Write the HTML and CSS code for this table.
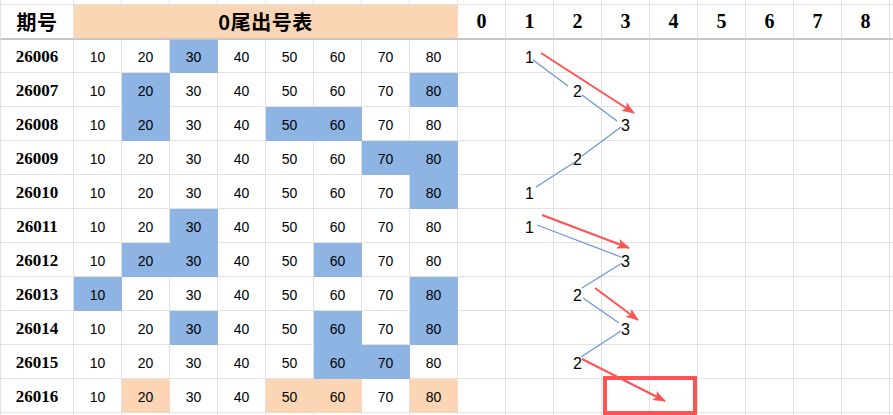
FILE: index.html
```html
<!DOCTYPE html>
<html lang="zh-CN">
<head>
<meta charset="utf-8">
<title>0尾出号表</title>
<link rel="stylesheet" href="styles.css">
</head>
<body>
<div class="page">
  <div class="sheet">
    <!-- top strip -->
    <div class="c top first"></div><div class="c top"></div><div class="c top"></div><div class="c top"></div><div class="c top"></div><div class="c top"></div><div class="c top"></div><div class="c top"></div><div class="c top"></div><div class="c top"></div><div class="c top"></div><div class="c top"></div><div class="c top"></div><div class="c top"></div><div class="c top"></div><div class="c top"></div><div class="c top"></div><div class="c top"></div><div class="c top"></div>
    <!-- header -->
    <div class="c hd first hd-cn">期号</div>
    <div class="c hd p merged hd-cn">0尾出号表</div>
    <div class="c hd hd-num">0</div><div class="c hd hd-num">1</div><div class="c hd hd-num">2</div><div class="c hd hd-num">3</div><div class="c hd hd-num">4</div><div class="c hd hd-num">5</div><div class="c hd hd-num">6</div><div class="c hd hd-num">7</div><div class="c hd hd-num">8</div><div class="c hd"></div>
    <!-- 26006 -->
    <div class="c first lab">26006</div>
    <div class="c">10</div><div class="c">20</div><div class="c b">30</div><div class="c">40</div><div class="c">50</div><div class="c">60</div><div class="c">70</div><div class="c">80</div>
    <div class="c"></div><div class="c t">1</div><div class="c"></div><div class="c"></div><div class="c"></div><div class="c"></div><div class="c"></div><div class="c"></div><div class="c"></div><div class="c"></div>
    <!-- 26007 -->
    <div class="c first lab">26007</div>
    <div class="c">10</div><div class="c b">20</div><div class="c">30</div><div class="c">40</div><div class="c">50</div><div class="c">60</div><div class="c">70</div><div class="c b">80</div>
    <div class="c"></div><div class="c"></div><div class="c t">2</div><div class="c"></div><div class="c"></div><div class="c"></div><div class="c"></div><div class="c"></div><div class="c"></div><div class="c"></div>
    <!-- 26008 -->
    <div class="c first lab">26008</div>
    <div class="c">10</div><div class="c b">20</div><div class="c">30</div><div class="c">40</div><div class="c b">50</div><div class="c b">60</div><div class="c">70</div><div class="c">80</div>
    <div class="c"></div><div class="c"></div><div class="c"></div><div class="c t">3</div><div class="c"></div><div class="c"></div><div class="c"></div><div class="c"></div><div class="c"></div><div class="c"></div>
    <!-- 26009 -->
    <div class="c first lab">26009</div>
    <div class="c">10</div><div class="c">20</div><div class="c">30</div><div class="c">40</div><div class="c">50</div><div class="c">60</div><div class="c b">70</div><div class="c b">80</div>
    <div class="c"></div><div class="c"></div><div class="c t">2</div><div class="c"></div><div class="c"></div><div class="c"></div><div class="c"></div><div class="c"></div><div class="c"></div><div class="c"></div>
    <!-- 26010 -->
    <div class="c first lab">26010</div>
    <div class="c">10</div><div class="c">20</div><div class="c">30</div><div class="c">40</div><div class="c">50</div><div class="c">60</div><div class="c">70</div><div class="c b">80</div>
    <div class="c"></div><div class="c t">1</div><div class="c"></div><div class="c"></div><div class="c"></div><div class="c"></div><div class="c"></div><div class="c"></div><div class="c"></div><div class="c"></div>
    <!-- 26011 -->
    <div class="c first lab">26011</div>
    <div class="c">10</div><div class="c">20</div><div class="c b">30</div><div class="c">40</div><div class="c">50</div><div class="c">60</div><div class="c">70</div><div class="c">80</div>
    <div class="c"></div><div class="c t">1</div><div class="c"></div><div class="c"></div><div class="c"></div><div class="c"></div><div class="c"></div><div class="c"></div><div class="c"></div><div class="c"></div>
    <!-- 26012 -->
    <div class="c first lab">26012</div>
    <div class="c">10</div><div class="c b">20</div><div class="c b">30</div><div class="c">40</div><div class="c">50</div><div class="c b">60</div><div class="c">70</div><div class="c">80</div>
    <div class="c"></div><div class="c"></div><div class="c"></div><div class="c t">3</div><div class="c"></div><div class="c"></div><div class="c"></div><div class="c"></div><div class="c"></div><div class="c"></div>
    <!-- 26013 -->
    <div class="c first lab">26013</div>
    <div class="c b">10</div><div class="c">20</div><div class="c">30</div><div class="c">40</div><div class="c">50</div><div class="c">60</div><div class="c">70</div><div class="c b">80</div>
    <div class="c"></div><div class="c"></div><div class="c t">2</div><div class="c"></div><div class="c"></div><div class="c"></div><div class="c"></div><div class="c"></div><div class="c"></div><div class="c"></div>
    <!-- 26014 -->
    <div class="c first lab">26014</div>
    <div class="c">10</div><div class="c">20</div><div class="c b">30</div><div class="c">40</div><div class="c">50</div><div class="c b">60</div><div class="c">70</div><div class="c b">80</div>
    <div class="c"></div><div class="c"></div><div class="c"></div><div class="c t">3</div><div class="c"></div><div class="c"></div><div class="c"></div><div class="c"></div><div class="c"></div><div class="c"></div>
    <!-- 26015 -->
    <div class="c first lab">26015</div>
    <div class="c">10</div><div class="c">20</div><div class="c">30</div><div class="c">40</div><div class="c">50</div><div class="c b">60</div><div class="c b">70</div><div class="c">80</div>
    <div class="c"></div><div class="c"></div><div class="c t">2</div><div class="c"></div><div class="c"></div><div class="c"></div><div class="c"></div><div class="c"></div><div class="c"></div><div class="c"></div>
    <!-- 26016 -->
    <div class="c first lab">26016</div>
    <div class="c">10</div><div class="c p">20</div><div class="c">30</div><div class="c">40</div><div class="c p">50</div><div class="c p">60</div><div class="c">70</div><div class="c p">80</div>
    <div class="c"></div><div class="c"></div><div class="c"></div><div class="c"></div><div class="c"></div><div class="c"></div><div class="c"></div><div class="c"></div><div class="c"></div><div class="c"></div>
    <!-- partial bottom row -->
    <div class="c first"></div><div class="c"></div><div class="c"></div><div class="c"></div><div class="c"></div><div class="c"></div><div class="c"></div><div class="c"></div><div class="c"></div><div class="c"></div><div class="c"></div><div class="c"></div><div class="c"></div><div class="c"></div><div class="c"></div><div class="c"></div><div class="c"></div><div class="c"></div><div class="c"></div>
  </div>

  <svg class="overlay" width="893" height="415" viewBox="0 0 893 415">
    <defs>
      <marker id="ah" markerUnits="userSpaceOnUse" markerWidth="13" markerHeight="10" viewBox="0 0 13 10" refX="12" refY="5" orient="auto">
        <path d="M0,0 L13,5 L0,10 L3,5 Z" fill="#ff5252"/>
      </marker>
    </defs>
    <g class="trend">
      <line x1="533" y1="60" x2="568" y2="86"/>
      <line x1="582" y1="95" x2="617" y2="121"/>
      <line x1="621" y1="127" x2="582" y2="156"/>
      <line x1="575" y1="162" x2="536" y2="187"/>
      <line x1="537" y1="225" x2="621" y2="257"/>
      <line x1="622" y1="263" x2="582" y2="288"/>
      <line x1="583" y1="298" x2="619" y2="323"/>
      <line x1="621" y1="331" x2="581" y2="357"/>
    </g>
    <g class="arrows">
      <line x1="541" y1="53" x2="634" y2="113"/>
      <line x1="542" y1="215" x2="629" y2="248"/>
      <line x1="595" y1="288" x2="638" y2="320"/>
      <line x1="582" y1="359" x2="665" y2="401"/>
    </g>
    <rect class="box" x="605" y="378" width="90" height="35"/>
  </svg>
</div>
</body>
</html>
```
FILE: styles.css
```css
html, body {
  margin: 0;
  padding: 0;
  background: #fff;
  overflow: hidden;
}

.page {
  position: relative;
  width: 893px;
  height: 415px;
  overflow: hidden;
}

.sheet {
  display: grid;
  grid-template-columns: 74px repeat(17, 48px) 48px;
  grid-template-rows: 5px 35px 33px repeat(10, 34px) 34px;
  width: 938px;
  font-family: "Liberation Sans", Arial, sans-serif;
  font-size: 14px;
  color: #000;
}

.c {
  box-sizing: border-box;
  border-right: 1px solid #e2e2e2;
  border-bottom: 1px solid #e2e2e2;
  display: flex;
  align-items: center;
  justify-content: center;
  padding-top: 2px;
  background: #fff;
  overflow: hidden;
}

.c.first {
  border-left: 1px solid #e2e2e2;
}

.c.top {
  padding: 0;
}

.c.hd {
  border-bottom: 2px solid #c6c6c6;
  padding-top: 0;
}

.hd-cn {
  font-family: "Noto Sans CJK SC", "Liberation Serif", serif;
  font-weight: 700;
  font-size: 20px;
  letter-spacing: 0.5px;
}

.hd-num {
  font-family: "Liberation Serif", "Times New Roman", serif;
  font-weight: 700;
  font-size: 20px;
}

.merged {
  grid-column: span 8;
}

.lab {
  font-family: "Liberation Serif", "Times New Roman", serif;
  font-weight: 700;
  font-size: 17px;
}

.b {
  background: #8db4e2;
  border-right-color: #8db4e2;
  border-bottom-color: #8db4e2;
}

.p {
  background: #fcd5b4;
  border-right-color: #fcd5b4;
}

.c.p:not(.hd) {
  border-bottom-color: #fcd5b4;
}

.t {
  font-size: 16px;
  padding-top: 4px;
}

.overlay {
  position: absolute;
  left: 0;
  top: 0;
  pointer-events: none;
}

.trend line {
  stroke: #6e98d3;
  stroke-width: 1.3;
}

.arrows line {
  stroke: #ff5252;
  stroke-width: 2;
  marker-end: url(#ah);
}

.box {
  fill: none;
  stroke: #ff5252;
  stroke-width: 4;
}
```
